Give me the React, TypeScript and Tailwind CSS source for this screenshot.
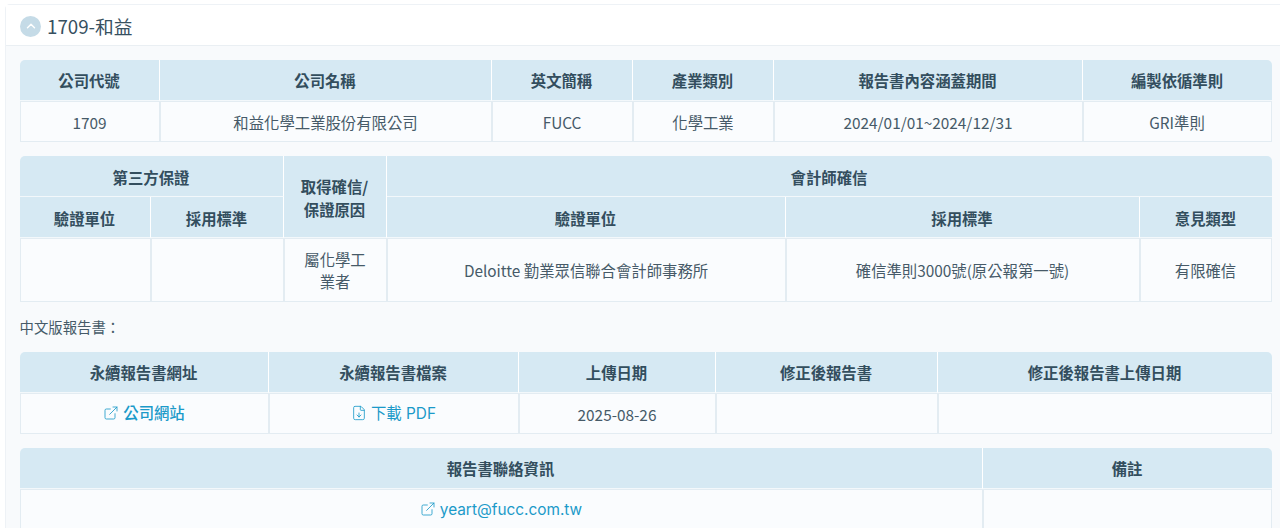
import { ExternalLink, FileDown, ChevronUp } from "lucide-react";
import type { ReactNode } from "react";

const th = "h-[41px] border-r border-b border-r-white border-b-[#f3f8fb] bg-[#d6e9f3] p-0 pt-[2px] text-center text-[15.36px] font-bold text-[#334e5e] last:border-r-0";
const td = "h-[41px] border border-[#e3ecf2] bg-[#fafcfe] p-0 pt-[3px] text-center text-[15.36px] font-normal text-[#465a68]";
const linkCell = "h-[41px] border border-[#e3ecf2] bg-[#fafcfe] p-0 pt-[1px] text-center";
const link = "inline-flex items-center justify-center gap-1 font-['Inter','Noto_Sans_CJK_TC',sans-serif] text-[15.36px] text-[#1b9ac9]";

function Table({ widths, children }: { widths: number[]; children: ReactNode }) {
  return (
    <div className="overflow-hidden rounded-t-[5px]">
      <table className="w-full table-fixed border-separate border-spacing-0">
        <colgroup>
          {widths.map((w, i) => <col key={i} style={{ width: w }} />)}
        </colgroup>
        {children}
      </table>
    </div>
  );
}

export default function App() {
  return (
    <div className="h-[528px] overflow-hidden bg-white pl-[5px] pt-1 font-['Noto_Sans_CJK_TC','Noto_Sans',sans-serif]">
      <div className="-mr-2 h-[600px] rounded-tl-[5px] border-l border-t border-[#eef2f6] bg-[#f8fafc]">
        <div className="flex h-[41px] items-center gap-[6px] border-b border-[#eaeff3] bg-white pl-[14px] pt-[2px] text-[18.72px] text-[#37505f]">
          <span className="flex h-[21px] w-[21px] items-center justify-center rounded-full bg-[#c5dbe7]">
            <ChevronUp className="h-[14px] w-[14px] text-white" strokeWidth={2.5} />
          </span>
          1709-和益
        </div>

        <div className="flex w-[1265.5px] flex-col pl-[13.5px] pt-[14px]">
          <Table widths={[140, 332, 141, 141, 309, 189]}>
            <thead>
              <tr>
                <th className={th}>公司代號</th>
                <th className={th}>公司名稱</th>
                <th className={th}>英文簡稱</th>
                <th className={th}>產業類別</th>
                <th className={th}>報告書內容涵蓋期間</th>
                <th className={th}>編製依循準則</th>
              </tr>
            </thead>
            <tbody>
              <tr>
                <td className={td}>1709</td>
                <td className={td}>和益化學工業股份有限公司</td>
                <td className={td}>FUCC</td>
                <td className={td}>化學工業</td>
                <td className={td}>2024/01/01~2024/12/31</td>
                <td className={td}>GRI準則</td>
              </tr>
            </tbody>
          </Table>

          <div className="mt-[14px]">
            <Table widths={[131, 133, 103, 399, 354, 132]}>
              <thead>
                <tr>
                  <th colSpan={2} className={`${th} !pt-1`}>第三方保證</th>
                  <th rowSpan={2} className={`${th} leading-[23px]`}>取得確信/<br />保證原因</th>
                  <th colSpan={3} className={`${th} !pt-1`}>會計師確信</th>
                </tr>
                <tr>
                  <th className={`${th} !pt-1`}>驗證單位</th>
                  <th className={`${th} !pt-1`}>採用標準</th>
                  <th className={`${th} !pt-1`}>驗證單位</th>
                  <th className={`${th} !pt-1`}>採用標準</th>
                  <th className={`${th} !pt-1`}>意見類型</th>
                </tr>
              </thead>
              <tbody>
                <tr>
                  <td className={`${td} !h-[64px]`}></td>
                  <td className={td}></td>
                  <td className={`${td} px-4 !pt-0 leading-[22px]`}>屬化學工業者</td>
                  <td className={`${td} !pt-[1px]`}>Deloitte 勤業眾信聯合會計師事務所</td>
                  <td className={`${td} !pt-[1px]`}>確信準則3000號(原公報第一號)</td>
                  <td className={`${td} !pt-[1px]`}>有限確信</td>
                </tr>
              </tbody>
            </Table>
          </div>

          <p className="my-[14px] h-[22px] text-[14.4px] leading-[22px] text-[#465a68]">中文版報告書：</p>

          <Table widths={[249, 250, 197, 222, 334]}>
            <thead>
              <tr>
                <th className={th}>永續報告書網址</th>
                <th className={th}>永續報告書檔案</th>
                <th className={th}>上傳日期</th>
                <th className={th}>修正後報告書</th>
                <th className={th}>修正後報告書上傳日期</th>
              </tr>
            </thead>
            <tbody>
              <tr>
                <td className={linkCell}>
                  <a className={`${link} font-medium`}><ExternalLink className="h-4 w-4" strokeWidth={1.25} />公司網站</a>
                </td>
                <td className={linkCell}>
                  <a className={link}><FileDown className="h-4 w-4" strokeWidth={1.25} />下載 PDF</a>
                </td>
                <td className={td}>2025-08-26</td>
                <td className={td}></td>
                <td className={td}></td>
              </tr>
            </tbody>
          </Table>

          <div className="mt-[14px]">
            <Table widths={[963, 289]}>
              <thead>
                <tr>
                  <th className={th}>報告書聯絡資訊</th>
                  <th className={th}>備註</th>
                </tr>
              </thead>
              <tbody>
                <tr>
                  <td className={linkCell}>
                    <a className={link}><ExternalLink className="h-4 w-4" strokeWidth={1.25} />yeart@fucc.com.tw</a>
                  </td>
                  <td className={td}></td>
                </tr>
              </tbody>
            </Table>
          </div>
        </div>
      </div>
    </div>
  );
}
